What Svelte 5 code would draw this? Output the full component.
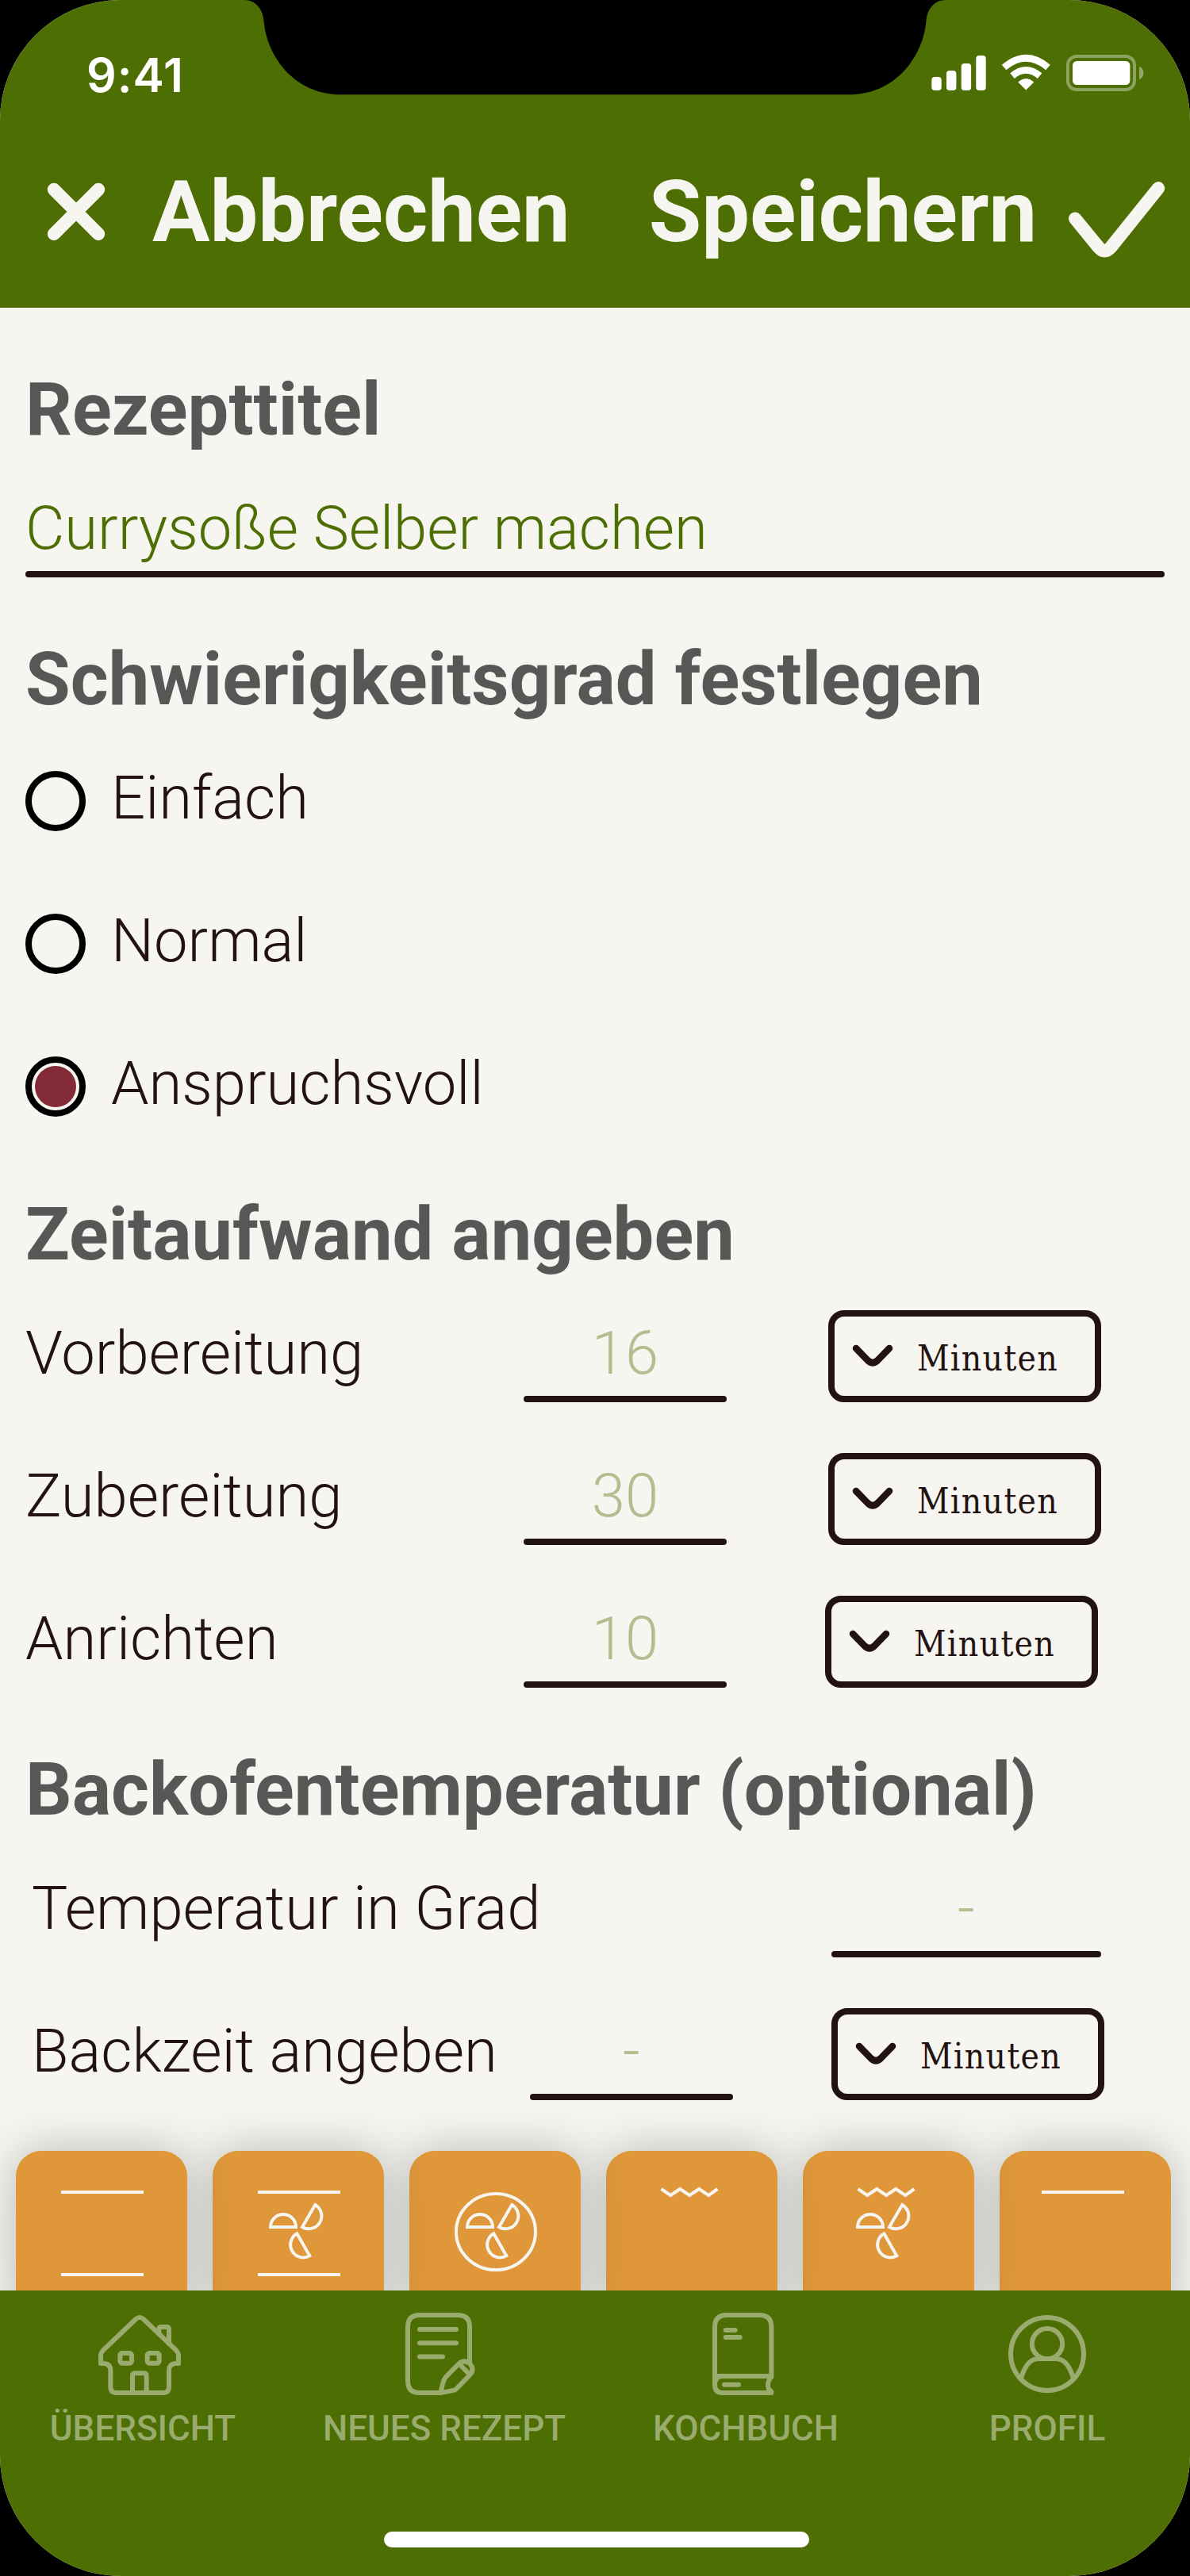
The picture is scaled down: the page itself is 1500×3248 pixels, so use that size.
<script>
  const levels = ['Einfach', 'Normal', 'Anspruchsvoll'];
  let level = $state('Anspruchsvoll');

  const times = [
    { label: 'Vorbereitung', value: '16', shifted: false },
    { label: 'Zubereitung', value: '30', shifted: false },
    { label: 'Anrichten', value: '10', shifted: true }
  ];

  // Oven modes: which symbols each tile shows
  const modes = [
    { top: 57, bottom: true },
    { top: 57, bottom: true, fan: 0 },
    { ring: true, fan: 0 },
    { grill: true },
    { grill: true, fan: -4 },
    { top: 53 }
  ];
</script>

{#snippet unitSelect(shifted)}
  <button class="select" class:shifted>
    <svg class="chevron" width="52" height="30" viewBox="0 0 52 30">
      <path d="M5 5 L20 20.5 Q26 26 32 20.5 L47 5" />
    </svg>
    <span>Minuten</span>
  </button>
{/snippet}

<div class="phone">
  <svg class="notch" width="884" height="120" viewBox="308 0 884 120">
    <path d="M308 0 C322 0 331 11 332.5 26 C336 70 370 119.3 430 119.3 H1070 C1130 119.3 1164 70 1167.5 26 C1169 11 1178 0 1192 0 Z" />
  </svg>

  <header>
    <div class="status">
      <span class="clock">9:41</span>
      <svg width="268" height="46" viewBox="1174 69 268 46">
        <g fill="#fff">
          <rect x="1174.3" y="97" width="12.4" height="17" rx="4" />
          <rect x="1193" y="89" width="12.4" height="25" rx="4" />
          <rect x="1211.7" y="80" width="12.4" height="34" rx="4" />
          <rect x="1230.3" y="70" width="12.4" height="44" rx="4" />
          <path d="M1293.3 113 L1283.8 103.6 Q1293.3 95.5 1302.8 103.6 Z" stroke="#fff" stroke-width="1" stroke-linejoin="round" />
        </g>
        <g fill="none" stroke="#fff" stroke-width="8.6">
          <path d="M1276 95.6 Q1293.3 81.2 1310.6 95.6" />
          <path d="M1265.6 85 Q1293.3 61.6 1321 85" />
        </g>
        <rect x="1346" y="71" width="84" height="42" rx="11" fill="none" stroke="#fff" stroke-width="4" opacity=".36" />
        <rect x="1352" y="77" width="72.4" height="30" rx="5.5" fill="#fff" />
        <path d="M1436 84 Q1441.5 86 1441.5 92 Q1441.5 98 1436 100 Z" fill="#fff" opacity=".4" />
      </svg>
    </div>
    <div class="actions">
      <button class="action cancel">
        <svg width="72" height="72" viewBox="0 0 72 72">
          <path d="M8 8 L64 64 M64 8 L8 64" />
        </svg>
        <span>Abbrechen</span>
      </button>
      <button class="action save">
        <span>Speichern</span>
        <svg class="check" width="121" height="96" viewBox="1347 229 121 96">
          <path d="M1355.2 275.6 L1384.5 311.5 Q1392.5 321 1400.5 311.5 L1460 237.3" />
        </svg>
      </button>
    </div>
  </header>

  <main>
    <h2>Rezepttitel</h2>
    <div class="title-field">Currysoße Selber machen</div>

    <h2>Schwierigkeitsgrad festlegen</h2>
    <div class="levels">
      {#each levels as name}
        <button class="level" onclick={() => (level = name)}>
          <span class="radio" class:checked={level === name}></span>
          {name}
        </button>
      {/each}
    </div>

    <h2 class="time-heading">Zeitaufwand angeben</h2>
    <div class="rows">
      {#each times as t}
        <div class="row">
          <span class="label">{t.label}</span>
          <span class="value">{t.value}</span>
          {@render unitSelect(t.shifted)}
        </div>
      {/each}
    </div>

    <h2>Backofentemperatur (optional)</h2>
    <div class="rows oven">
      <div class="row temperature">
        <span class="label">Temperatur in Grad</span>
        <span class="value">-</span>
      </div>
      <div class="row">
        <span class="label">Backzeit angeben</span>
        <span class="value">-</span>
        {@render unitSelect(false)}
      </div>
    </div>
  </main>

  <section class="modes">
    {#each modes as m, i}
      <div class="mode" style:z-index={modes.length - i}>
        <svg width="216" height="216" viewBox="0 0 216 216">
          {#if m.top}<path d="M{m.top} 52 h104" />{/if}
          {#if m.bottom}<path d="M57 156 h104" />{/if}
          {#if m.ring}<ellipse cx="109" cy="102" rx="50" ry="48" />{/if}
          {#if m.grill}<path d="M69.5 48 L81.3 56 L93.2 48 L105.2 56 L117.2 48 L129.2 56 L140.5 48" />{/if}
          {#if m.fan !== undefined}
            <g transform="translate({m.fan} 0)">
              <path d="M73 96 A16 16 0 0 1 105 96 Z" />
              <path d="M129.3 68 A16 16 0 0 1 113 96 Z" />
              <path d="M122.3 132.3 A16 16 0 0 1 106.3 104.3 Z" />
            </g>
          {/if}
        </svg>
      </div>
    {/each}
  </section>

  <footer>
    <nav>
      <a href="#uebersicht">
        <svg width="104" height="104" viewBox="54 48 312 312">
          <path d="M184 72 Q198 60 212 72 L335 189 Q345 199 345 212 V240 H333 Q309 242 309 266 V328 Q309 351 287 351 H110 Q88 351 88 328 V266 Q88 242 63 240 H51 V212 Q51 199 61 189 Z" />
          <rect x="124" y="201" width="44" height="38" rx="8" />
          <rect x="227" y="201" width="45" height="38" rx="8" />
          <path d="M171 351 V287 Q171 277 181 277 H214 Q224 277 224 287 V351" />
          <path d="M271 128 V110 Q271 102 279 102 H301 Q309 102 309 110 V165" />
        </svg>
        <span>ÜBERSICHT</span>
      </a>
      <a href="#neu">
        <svg width="104" height="104" viewBox="1194 48 312 312">
          <path d="M1446 232 V102 Q1446 57 1401 57 H1257 Q1212 57 1212 102 V306 Q1212 351 1257 351 H1337" />
          <path d="M1257 111 H1395 M1257 163 H1395 M1257 214.500 H1344" />
          <path d="M1337 350 Q1342 320 1350 300 Q1352 295 1356 291 L1405 241 Q1425 224 1446 240 Q1466 262 1448 282 L1400 332 Q1395 338 1388 341 Q1365 347 1337 350 Z" />
          <path d="M1408 243 L1445 281" />
        </svg>
        <span>NEUES REZEPT</span>
      </a>
      <a href="#kochbuch">
        <svg width="104" height="104" viewBox="24 48 312 312">
          <path d="M63 322 V102 Q63 57 108 57 H232 Q277 57 277 102 V292 Q264 303 264 321 Q264 339 277 346 V351 H92 Q63 351 63 322 Q63 288 92 288 H277" />
          <path d="M63 288 H100" />
          <path d="M104 114 H140 M104 141 H158 M99 320 H153" />
        </svg>
        <span>KOCHBUCH</span>
      </a>
      <a href="#profil">
        <svg width="104" height="104" viewBox="1164 48 312 312">
          <circle cx="1320" cy="204" r="138" />
          <circle cx="1320" cy="165.500" r="57.500" />
          <path stroke-linecap="butt" d="M1221 296 C1238 240 1260 222 1290 222 H1350 C1380 222 1402 240 1419 296" />
        </svg>
        <span>PROFIL</span>
      </a>
    </nav>
    <div class="home"></div>
  </footer>
</div>

<style>
  :global(body) {
    margin: 0;
    background: #000;
  }

  .phone {
    position: relative;
    display: flex;
    flex-direction: column;
    width: 1500px;
    height: 3248px;
    overflow: hidden;
    border-radius: 152px;
    background: #f6f5ef;
    color: #231212;
    font-family: Roboto, 'Liberation Sans', sans-serif;
    font-size: 76px;
    font-weight: 300;
  }

  button {
    margin: 0;
    padding: 0;
    border: 0;
    background: none;
    color: inherit;
    font: inherit;
    text-align: left;
  }

  svg {
    display: block;
    flex: none;
    overflow: visible;
  }

  .notch {
    position: absolute;
    top: 0;
    left: 308px;
  }

  header {
    flex: none;
    height: 388px;
    background: #4c6e02;
  }

  .status {
    box-sizing: border-box;
    display: flex;
    align-items: center;
    justify-content: space-between;
    height: 146px;
    padding: 44px 58px 0 109px;
    color: #fff;
  }

  .status svg {
    margin-top: -6px;
  }

  .clock {
    font-family: Inter, sans-serif;
    font-size: 59px;
    font-weight: 600;
    line-height: 72px;
    letter-spacing: 1px;
  }

  .actions {
    display: flex;
    align-items: center;
    justify-content: space-between;
    height: 242px;
    padding: 0 32px 0 60px;
    color: #f6f5ef;
    font-size: 108px;
    font-weight: 700;
    line-height: 130px;
  }

  .action {
    display: flex;
    align-items: center;
    gap: 60px;
  }

  .save {
    gap: 40px;
  }

  .actions path {
    fill: none;
    stroke: #f6f5ef;
    stroke-width: 16.4px;
    stroke-linecap: round;
  }

  .check {
    margin-top: 19px;
  }

  main {
    flex: none;
    height: 2324px;
    padding: 0 32px;
  }

  h2 {
    margin: 75px 0 -1px;
    color: #575757;
    font-size: 92px;
    font-weight: 700;
    line-height: 108px;
    letter-spacing: 0.05px;
    white-space: nowrap;
  }

  .title-field {
    padding-top: 52px;
    color: #4c6e02;
    line-height: 88px;
  }

  .title-field::after,
  .value::after {
    content: '';
    display: block;
    height: 8px;
    border-radius: 4px;
    background: #231212;
  }

  .title-field::after {
    margin-top: 10px;
  }

  .levels {
    display: flex;
    flex-direction: column;
    margin-top: 6px;
  }

  .level {
    display: flex;
    align-items: center;
    gap: 32px;
    height: 180px;
    line-height: 108px;
  }

  .radio {
    box-sizing: border-box;
    width: 76px;
    height: 76px;
    margin-top: 8px;
    padding: 4px;
    border: 8px solid #000;
    border-radius: 50%;
  }

  .checked::before {
    content: '';
    display: block;
    height: 100%;
    border-radius: 50%;
    background: #822a38;
  }

  h2.time-heading {
    margin-top: 47px;
  }

  .rows {
    display: flex;
    flex-direction: column;
    gap: 64px;
    margin-top: 42px;
  }

  .row {
    display: grid;
    grid-template-columns: 628px 256px 344px;
    height: 116px;
    line-height: 108px;
    white-space: nowrap;
  }

  .row .select {
    margin-left: 128px;
  }

  .row .select.shifted {
    margin-left: 124px;
  }

  .oven {
    padding-left: 8px;
  }

  .oven .row .select {
    margin-left: 124px;
  }

  .row.temperature {
    grid-template-columns: 1008px 340px;
  }

  .value {
    color: #b2be90;
    text-align: center;
  }

  .select {
    box-sizing: border-box;
    display: flex;
    align-items: center;
    gap: 30px;
    width: 344px;
    height: 116px;
    padding: 4px 0 0 22px;
    border: 8px solid #231212;
    border-radius: 20px;
    font-family: 'DejaVu Serif Condensed', 'DejaVu Serif', serif;
    font-size: 44px;
    font-weight: 400;
    line-height: 52px;
    letter-spacing: 1.3px;
  }

  .select span {
    padding-top: 2px;
  }

  .chevron {
    margin-top: -4px;
  }

  .chevron path {
    fill: none;
    stroke: #231212;
    stroke-width: 8.5px;
    stroke-linecap: round;
  }

  .modes {
    position: relative;
    z-index: 0;
    display: flex;
    flex: none;
    gap: 32px;
    height: 176px;
    padding-left: 20px;
  }

  .mode {
    position: relative;
    flex: none;
    width: 216px;
    height: 216px;
    border-radius: 32px;
    background: #df973a;
    box-shadow: 0 0 60px rgba(0, 0, 0, 0.25);
  }

  .mode svg {
    fill: none;
    stroke: #f6f5ef;
    stroke-width: 4px;
  }

  footer {
    position: relative;
    z-index: 1;
    box-sizing: border-box;
    flex: none;
    height: 360px;
    padding-top: 28px;
    background: #4c6e02;
  }

  nav {
    display: grid;
    grid-template-columns: repeat(4, 380px);
    height: 276px;
    margin: 0 -10px;
  }

  nav a {
    display: flex;
    flex-direction: column;
    align-items: center;
    gap: 16px;
    color: #9aab6e;
    font-size: 44px;
    font-weight: 500;
    line-height: 52px;
    text-decoration: none;
  }

  nav svg {
    fill: none;
    stroke: #9aab6e;
    stroke-width: 18px;
    stroke-linecap: round;
    stroke-linejoin: round;
  }

  .home {
    width: 536px;
    height: 20px;
    margin-left: 484px;
    border-radius: 10px;
    background: #fff;
  }
</style>
